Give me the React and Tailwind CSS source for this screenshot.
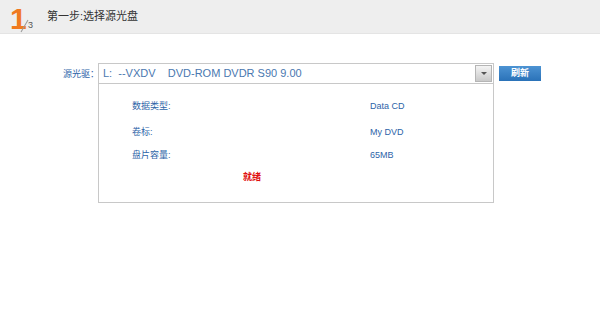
import React from "react";

const rows = [
  ["数据类型:", "Data CD", ""],
  ["卷标:", "My DVD", "mt-[14px]"],
  ["盘片容量:", "65MB", "mt-[11px]"],
];

export default function App() {
  return (
    <div className="w-[600px] h-[329px] bg-white font-['Liberation_Sans','Noto_Sans_CJK_SC',sans-serif] overflow-hidden">
      <div className="h-[34px] bg-[#eeeeee] border-b border-[#e4e4e4] flex items-center pl-[10px]">
        <div className="relative w-[28px] h-[34px]">
          <span className="absolute left-0 top-[8px] text-[30px] leading-[22px] font-bold text-[#f07a1e]">1</span>
          <span className="absolute left-[14px] top-[19px] w-px h-[14px] bg-[#9a9a9a] rotate-[30deg]"></span>
          <span className="absolute left-[18px] top-[21px] text-[9px] leading-none text-[#555]">3</span>
        </div>
        <span className="ml-[9px] text-[11px] text-[#333]">第一步:选择源光盘</span>
      </div>

      <div className="flex mt-[29px]">
        <div className="w-[98px] pl-[63px] pt-[5px] text-[9px] text-[#2d64a8] whitespace-nowrap">源光驱：</div>
        <div className="w-[396px]">
          <div className="h-[21px] border border-[#c8c8c8] flex items-center">
            <span className="flex-1 pl-[4px] text-[11px] text-[#4a78b0] whitespace-pre">L:  --VXDV    DVD-ROM DVDR S90 9.00</span>
            <span className="w-[17px] h-[17px] mr-[1px] bg-gradient-to-b from-[#f4f4f4] to-[#c9c9c9] border border-[#b5b5b5] flex items-center justify-center">
              <span className="w-0 h-0 border-l-[3px] border-r-[3px] border-t-[3px] border-l-transparent border-r-transparent border-t-[#555]"></span>
            </span>
          </div>
          <div className="h-[119px] pt-[17px] border border-t-0 border-[#c8c8c8]">
            {rows.map(([k, v, m], i) => (
              <div key={i} className={`${m} flex h-[12px] items-center text-[9px] text-[#2d64a8]`}>
                <span className="w-[271px] pl-[33px]">{k}</span>
                <span>{v}</span>
              </div>
            ))}
            <div className="mt-[9px] pl-[144px] text-[9px] leading-[12px] font-bold text-[#e01010]">就绪</div>
          </div>
        </div>
        <div className="ml-[5px] mt-[3px] w-[42px] h-[15px] bg-gradient-to-b from-[#4c93d3] to-[#2a72b8] flex items-center justify-center text-[9px] font-bold text-white">刷新</div>
      </div>
    </div>
  );
}
